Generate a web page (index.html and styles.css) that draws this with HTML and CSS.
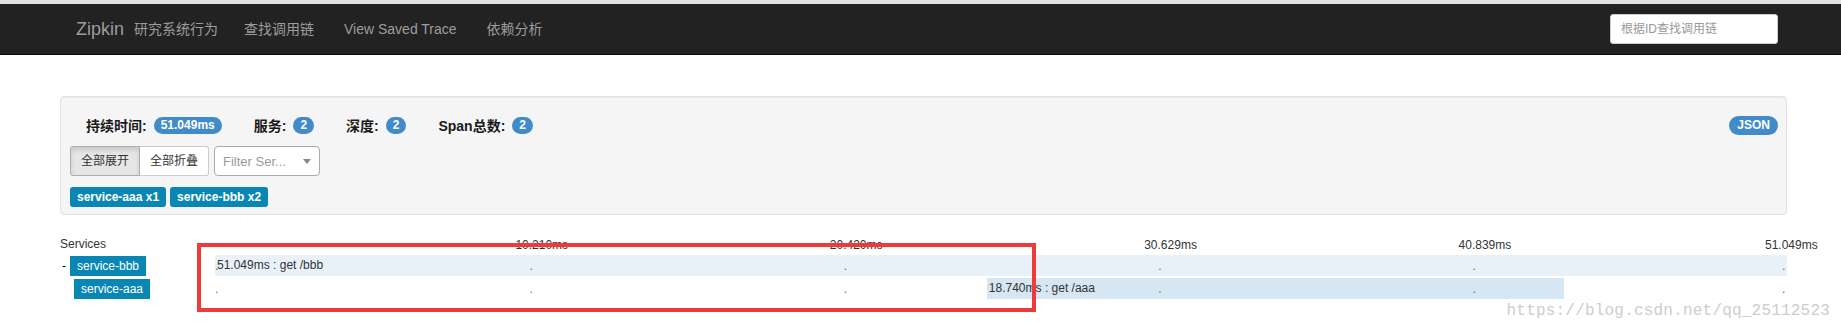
FILE: index.html
```html
<!DOCTYPE html>
<html lang="zh-CN">
<head>
<meta charset="utf-8">
<title>Zipkin</title>
<link rel="stylesheet" href="styles.css">
</head>
<body>
<div class="topstrip"></div>
<nav class="navbar">
  <span class="brand">Zipkin</span>
  <span class="brand-sub">研究系统行为</span>
  <ul class="nav">
    <li>查找调用链</li>
    <li>View Saved Trace</li>
    <li>依赖分析</li>
  </ul>
  <input class="search" type="text" placeholder="根据ID查找调用链">
</nav>
<main class="page">
  <section class="well">
    <div class="summary">
      <span class="stat-label">持续时间:</span><span class="badge">51.049ms</span>
      <span class="stat-label">服务:</span><span class="badge">2</span>
      <span class="stat-label">深度:</span><span class="badge">2</span>
      <span class="stat-label">Span总数:</span><span class="badge">2</span>
      <span class="badge json">JSON</span>
    </div>
    <div class="controls">
      <div class="btn-group">
        <button class="btn active">全部展开</button><button class="btn">全部折叠</button>
      </div>
      <div class="select"><span class="select-text">Filter Ser...</span><span class="caret"></span></div>
    </div>
    <div class="tags">
      <span class="tag">service-aaa x1</span>
      <span class="tag">service-bbb x2</span>
    </div>
  </section>

  <section class="trace">
    <div class="trace-row header">
      <div class="svc-col">Services</div>
      <div class="timeline">
        <span class="tick-label" style="left:20%">10.210ms</span>
        <span class="tick-label" style="left:40%">20.420ms</span>
        <span class="tick-label" style="left:60%">30.629ms</span>
        <span class="tick-label" style="left:80%">40.839ms</span>
        <span class="tick-label last" style="left:100%">51.049ms</span>
      </div>
    </div>

    <div class="trace-row span-row">
      <div class="svc-col"><span class="toggle">-</span><span class="svc">service-bbb</span></div>
      <div class="timeline">
        <div class="span-bar root" style="left:0%;width:100%"><span class="span-text">51.049ms : get /bbb</span></div>
        <span class="marker" style="left:0%">.</span>
        <span class="marker" style="left:20%">.</span>
        <span class="marker" style="left:40%">.</span>
        <span class="marker" style="left:60%">.</span>
        <span class="marker" style="left:80%">.</span>
        <span class="marker last" style="left:100%">.</span>
      </div>
    </div>

    <div class="trace-row span-row child">
      <div class="svc-col indent"><span class="svc">service-aaa</span></div>
      <div class="timeline">
        <div class="span-bar" style="left:49.1%;width:36.7%"><span class="span-text">18.740ms : get /aaa</span></div>
        <span class="marker" style="left:0%">.</span>
        <span class="marker" style="left:20%">.</span>
        <span class="marker" style="left:40%">.</span>
        <span class="marker" style="left:60%">.</span>
        <span class="marker" style="left:80%">.</span>
        <span class="marker last" style="left:100%">.</span>
      </div>
    </div>
  </section>
</main>
<div class="annotation"></div>
<div class="watermark">https://blog.csdn.net/qq_25112523</div>
</body>
</html>
```

FILE: styles.css
```css
* { box-sizing: border-box; }

html, body {
  margin: 0;
  padding: 0;
}

body {
  position: relative;
  height: 332px;
  overflow: hidden;
  background: #fff;
  color: #333;
  font-family: "Liberation Sans", Arial, "Noto Sans CJK SC", sans-serif;
  font-size: 12px;
}

.topstrip {
  height: 4px;
  background: #e0e0e0;
}

/* ---------- navbar ---------- */
.navbar {
  display: flex;
  align-items: center;
  height: 51px;
  padding: 0 63px 0 76px;
  background: #222;
  border-bottom: 1px solid #080808;
}

.brand {
  font-size: 18px;
  line-height: 20px;
  color: #9d9d9d;
}

.brand-sub {
  margin-left: 10px;
  font-size: 14px;
  line-height: 20px;
  color: #9d9d9d;
}

.nav {
  display: flex;
  gap: 30px;
  margin: 0 0 0 26px;
  padding: 0;
  list-style: none;
  font-size: 14px;
  line-height: 20px;
  color: #9d9d9d;
}

.search {
  margin-left: auto;
  width: 168px;
  height: 30px;
  padding: 5px 10px;
  border: 1px solid #ccc;
  border-radius: 3px;
  background: #fff;
  font-family: inherit;
  font-size: 12px;
  color: #555;
}

.search::placeholder { color: #999; }

/* ---------- page ---------- */
.page {
  padding: 0 54px 0 60px;
}

.well {
  margin-top: 41px;
  padding: 9px 8px 7px 9px;
  background: #f5f5f5;
  border: 1px solid #e3e3e3;
  border-radius: 4px;
  box-shadow: inset 0 1px 1px rgba(0, 0, 0, .05);
}

.summary {
  display: flex;
  align-items: center;
  height: 38px;
  padding-left: 16px;
}

.stat-label {
  margin-right: 7px;
  font-size: 14px;
  font-weight: bold;
  color: #1a1a1a;
}

.badge {
  height: 17px;
  margin-right: 32px;
  padding: 0 7px;
  border-radius: 10px;
  background: #428bca;
  color: #fff;
  font-size: 12px;
  font-weight: bold;
  line-height: 17px;
}

.badge.json {
  margin-left: auto;
  margin-right: 0;
  height: 19px;
  padding: 0 8px;
  line-height: 19px;
}

.controls {
  display: flex;
  gap: 5px;
  height: 30px;
  margin-top: 2px;
}

.btn-group { display: flex; }

.btn {
  height: 30px;
  padding: 0 10px;
  border: 1px solid #ccc;
  background: #fff;
  color: #333;
  font-family: inherit;
  font-size: 12px;
  line-height: 28px;
}

.btn:first-child { border-radius: 3px 0 0 3px; }
.btn:last-child { border-radius: 0 3px 3px 0; border-left: none; }

.btn.active {
  background: #e6e6e6;
  border-color: #adadad;
  box-shadow: inset 0 3px 5px rgba(0, 0, 0, .125);
}

.select {
  display: flex;
  align-items: center;
  width: 106px;
  height: 30px;
  padding: 0 8px;
  background: #fff;
  border: 1px solid #aaa;
  border-radius: 4px;
  color: #999;
  font-size: 13px;
}

.caret {
  margin-left: auto;
  width: 0;
  height: 0;
  border-top: 5px solid #888;
  border-left: 4px solid transparent;
  border-right: 4px solid transparent;
}

.tags {
  display: flex;
  gap: 4px;
  margin-top: 11px;
}

.tag {
  height: 20px;
  padding: 0 7px;
  border-radius: 3px;
  background: #0a86b5;
  color: #fff;
  font-size: 12px;
  font-weight: bold;
  line-height: 20px;
}

/* ---------- trace timeline ---------- */
.trace {
  margin-top: 19px;
}

.trace-row {
  display: flex;
  height: 21px;
}

.trace-row.header {
  height: 20px;
  line-height: 20px;
  font-size: 12px;
  color: #333;
}

.trace-row.span-row { margin-top: 1px; }
.trace-row.child { margin-top: 2px; }

.svc-col {
  flex: none;
  display: flex;
  align-items: center;
  width: 155px;
}

.svc-col.indent { padding-left: 14px; }

.toggle {
  width: 10px;
  padding-left: 2px;
  font-size: 12px;
  color: #000;
}

.svc {
  height: 20px;
  padding: 0 7px;
  background: #0a86b5;
  color: #fff;
  font-size: 12px;
  line-height: 20px;
}

.timeline {
  position: relative;
  flex: 1;
}

.tick-label {
  position: absolute;
  top: 1px;
  margin-left: -14px;
  white-space: nowrap;
}

.tick-label.last { margin-left: -22px; }

.span-bar {
  position: absolute;
  top: 0;
  bottom: 0;
  background: #d6e6f2;
}

.span-bar.root { background: #e9f1f8; }

.span-text {
  display: block;
  padding-left: 2px;
  font-size: 12px;
  line-height: 21px;
  color: #333;
  white-space: nowrap;
}

.marker {
  position: absolute;
  top: 1px;
  font-size: 12px;
  line-height: 21px;
  color: #666;
}

.marker.last { margin-left: -5px; }

/* ---------- overlays ---------- */
.annotation {
  position: absolute;
  left: 197px;
  top: 243px;
  width: 839px;
  height: 69px;
  border: 4px solid #f03a3a;
}

.watermark {
  position: absolute;
  right: 11px;
  top: 302px;
  font-family: "Liberation Mono", "DejaVu Sans Mono", monospace;
  font-size: 16px;
  letter-spacing: 0.2px;
  line-height: 18px;
  color: #cdcdcd;
}
```
